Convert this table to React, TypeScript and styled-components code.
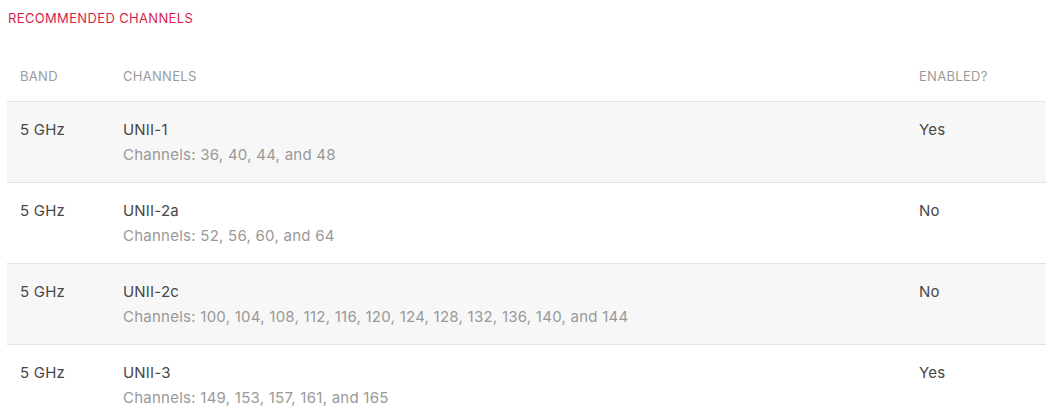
import React from "react";
import styled, { createGlobalStyle } from "styled-components";

const Global = createGlobalStyle`
  body {
    margin: 0;
    background: #ffffff;
    font-family: Inter, "Helvetica Neue", "Liberation Sans", sans-serif;
    -webkit-font-smoothing: antialiased;
  }
`;

const Page = styled.div`
  padding: 8px 13px 0 7px;
`;

const Title = styled.h2`
  margin: 0 0 23px 1px;
  font-size: 13px;
  font-weight: 400;
  line-height: 20px;
  letter-spacing: 0.35px;
  color: #d81f4b;
`;

const Table = styled.table`
  width: 100%;
  border-collapse: collapse;
  table-layout: fixed;
`;

const HeadCell = styled.th<{ $width?: string }>`
  width: ${(p) => p.$width || "auto"};
  text-align: left;
  font-size: 13px;
  font-weight: 400;
  line-height: 20px;
  letter-spacing: 0.3px;
  color: #9b9b9b;
  padding: 15px 13px 15px 13px;
  border-bottom: 1px solid #e3e3e3;
`;

const Row = styled.tr<{ $shaded: boolean }>`
  background: ${(p) => (p.$shaded ? "#f7f7f7" : "#ffffff")};
  border-bottom: 1px solid #e3e3e3;
  &:last-child {
    border-bottom: none;
  }
`;

const Cell = styled.td`
  vertical-align: top;
  padding: 18px 13px 17px 13px;
  font-size: 15px;
  line-height: 20px;
  letter-spacing: 0.2px;
  color: #474747;
`;

const Main = styled.div`
  color: #474747;
`;

const Sub = styled.div`
  margin-top: 5px;
  letter-spacing: 0.25px;
  color: #999999;
`;

const rows = [
  { band: "5 GHz", name: "UNII-1", channels: "Channels: 36, 40, 44, and 48", enabled: "Yes" },
  { band: "5 GHz", name: "UNII-2a", channels: "Channels: 52, 56, 60, and 64", enabled: "No" },
  {
    band: "5 GHz",
    name: "UNII-2c",
    channels: "Channels: 100, 104, 108, 112, 116, 120, 124, 128, 132, 136, 140, and 144",
    enabled: "No",
  },
  { band: "5 GHz", name: "UNII-3", channels: "Channels: 149, 153, 157, 161, and 165", enabled: "Yes" },
];

export default function App() {
  return (
    <Page>
      <Global />
      <Title>RECOMMENDED CHANNELS</Title>
      <Table>
        <thead>
          <tr>
            <HeadCell $width="77px">BAND</HeadCell>
            <HeadCell>CHANNELS</HeadCell>
            <HeadCell $width="114px">ENABLED?</HeadCell>
          </tr>
        </thead>
        <tbody>
          {rows.map((r, i) => (
            <Row key={r.name} $shaded={i % 2 === 0}>
              <Cell>{r.band}</Cell>
              <Cell>
                <Main>{r.name}</Main>
                <Sub>{r.channels}</Sub>
              </Cell>
              <Cell>{r.enabled}</Cell>
            </Row>
          ))}
        </tbody>
      </Table>
    </Page>
  );
}
